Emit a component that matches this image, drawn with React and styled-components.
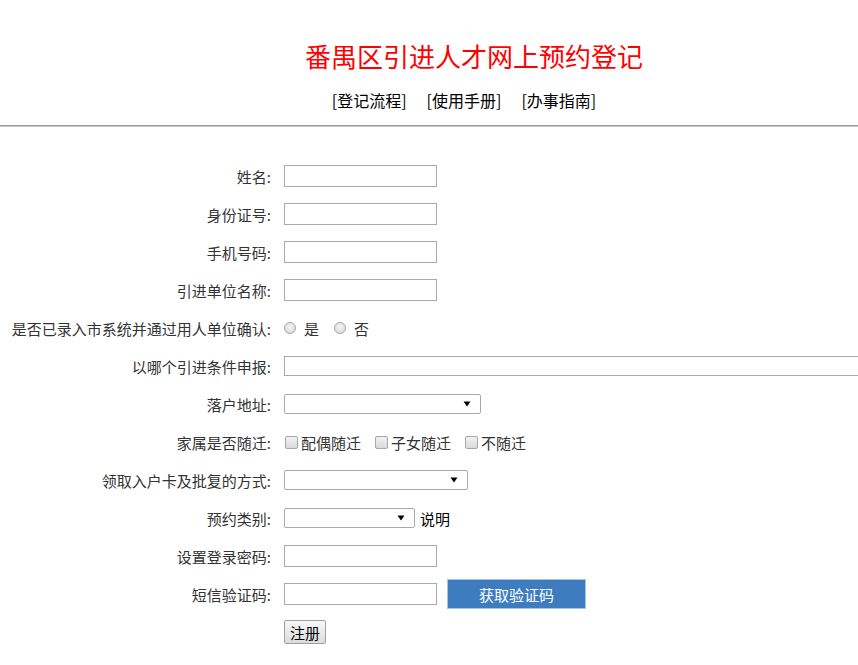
import React from "react";
import styled, { createGlobalStyle } from "styled-components";

const GlobalStyle = createGlobalStyle`
  html, body {
    margin: 0;
    padding: 0;
    background: #fff;
    overflow: hidden;
  }
  body {
    font-family: "Microsoft YaHei", "Noto Sans CJK SC", "Noto Sans", sans-serif;
    font-size: 15px;
    color: #333;
  }
`;

const Page = styled.div`
  width: 858px;
  overflow: hidden;
`;

const Header = styled.header`
  padding-top: 42px;
`;

const Title = styled.h1`
  margin: 0;
  padding-left: 90px;
  text-align: center;
  font-size: 26px;
  line-height: 28px;
  font-weight: normal;
  color: #ff0000;
`;

const Nav = styled.nav`
  display: flex;
  justify-content: center;
  gap: 20px;
  margin-top: 20px;
  padding-left: 70px;
  font-size: 16px;
  line-height: 21px;
`;

const NavLink = styled.a`
  color: #000;
  text-decoration: none;
`;

const Rule = styled.hr`
  margin: 14px 0 0;
  height: 0;
  border: none;
  border-top: 1px solid #9c9c9c;
  border-bottom: 1px solid #c4c4c4;
`;

const Form = styled.form`
  display: grid;
  grid-template-columns: 271px 1fr;
  column-gap: 13px;
  grid-auto-rows: 38px;
  margin-top: 30px;
`;

const Label = styled.label`
  display: flex;
  align-items: center;
  justify-content: flex-end;
  color: #333;
  white-space: nowrap;
`;

const Field = styled.div`
  display: flex;
  align-items: center;
  white-space: nowrap;
`;

const TextInput = styled.input`
  box-sizing: border-box;
  width: ${(p) => p.$width || 153}px;
  height: ${(p) => p.$height || 22}px;
  margin: 0;
  padding: 1px 2px;
  border: 1px solid #a9a9a9;
  border-radius: 0;
  font: inherit;
  font-size: 13px;
  outline: none;
  background: #fff;
`;

const arrow =
  "url(\"data:image/svg+xml;utf8,<svg xmlns='http://www.w3.org/2000/svg' width='8' height='6'><path d='M0.5 0.5 H7.5 L4 5.5 Z' fill='black'/></svg>\")";

const Select = styled.select`
  box-sizing: border-box;
  width: ${(p) => p.$width}px;
  height: 20px;
  margin: 0;
  padding: 0 16px 0 2px;
  border: 1px solid #a9a9a9;
  border-radius: 2px;
  appearance: none;
  -webkit-appearance: none;
  background: #fff ${arrow} no-repeat right 9px center;
  font: inherit;
  font-size: 13px;
  outline: none;
`;

const Radio = styled.input.attrs({ type: "radio" })`
  appearance: none;
  -webkit-appearance: none;
  box-sizing: border-box;
  width: 12px;
  height: 12px;
  margin: 0 8px 0 ${(p) => (p.$first ? 0 : 15)}px;
  border: 1px solid #a6a6a6;
  border-radius: 50%;
  background: radial-gradient(circle at 50% 40%, #f4f4f4 0%, #e2e2e2 60%, #d6d6d6 100%);
`;

const Checkbox = styled.input.attrs({ type: "checkbox" })`
  appearance: none;
  -webkit-appearance: none;
  box-sizing: border-box;
  width: 13px;
  height: 13px;
  margin: 0 3px 0 ${(p) => (p.$first ? 1 : 14)}px;
  border: 1px solid #a6a6a6;
  border-radius: 2px;
  background: linear-gradient(#f2f2f2, #dadada);
`;

const OptionText = styled.span`
  color: #333;
`;

const Note = styled.span`
  margin-left: 5px;
  color: #000;
`;

const CodeButton = styled.button`
  box-sizing: border-box;
  width: 139px;
  height: 30px;
  margin: 0 0 0 10px;
  border: 1px solid #a9c3e3;
  background: #3d7dbf;
  color: #fff;
  font: inherit;
  font-size: 15px;
  cursor: pointer;
`;

const SubmitButton = styled.button`
  box-sizing: border-box;
  width: 42px;
  height: 24px;
  margin: 0;
  padding: 0;
  border: 1px solid #a0a0a0;
  border-radius: 2px;
  background: linear-gradient(#f7f7f7, #dcdcdc);
  color: #000;
  font: inherit;
  font-size: 15px;
`;

const Empty = styled.div``;

export default function App() {
  return (
    <Page>
      <GlobalStyle />
      <Header>
        <Title>番禺区引进人才网上预约登记</Title>
        <Nav>
          <NavLink href="#">[登记流程]</NavLink>
          <NavLink href="#">[使用手册]</NavLink>
          <NavLink href="#">[办事指南]</NavLink>
        </Nav>
      </Header>
      <Rule />
      <Form onSubmit={(e) => e.preventDefault()}>
        <Label>姓名:</Label>
        <Field><TextInput /></Field>

        <Label>身份证号:</Label>
        <Field><TextInput /></Field>

        <Label>手机号码:</Label>
        <Field><TextInput /></Field>

        <Label>引进单位名称:</Label>
        <Field><TextInput /></Field>

        <Label>是否已录入市系统并通过用人单位确认:</Label>
        <Field>
          <Radio name="confirm" $first />
          <OptionText>是</OptionText>
          <Radio name="confirm" />
          <OptionText>否</OptionText>
        </Field>

        <Label>以哪个引进条件申报:</Label>
        <Field><TextInput $width={640} $height={20} /></Field>

        <Label>落户地址:</Label>
        <Field><Select $width={197}><option></option></Select></Field>

        <Label>家属是否随迁:</Label>
        <Field>
          <Checkbox $first />
          <OptionText>配偶随迁</OptionText>
          <Checkbox />
          <OptionText>子女随迁</OptionText>
          <Checkbox />
          <OptionText>不随迁</OptionText>
        </Field>

        <Label>领取入户卡及批复的方式:</Label>
        <Field><Select $width={184}><option></option></Select></Field>

        <Label>预约类别:</Label>
        <Field>
          <Select $width={131}><option></option></Select>
          <Note>说明</Note>
        </Field>

        <Label>设置登录密码:</Label>
        <Field><TextInput type="password" /></Field>

        <Label>短信验证码:</Label>
        <Field>
          <TextInput />
          <CodeButton type="button">获取验证码</CodeButton>
        </Field>

        <Empty />
        <Field><SubmitButton type="submit">注册</SubmitButton></Field>
      </Form>
    </Page>
  );
}
